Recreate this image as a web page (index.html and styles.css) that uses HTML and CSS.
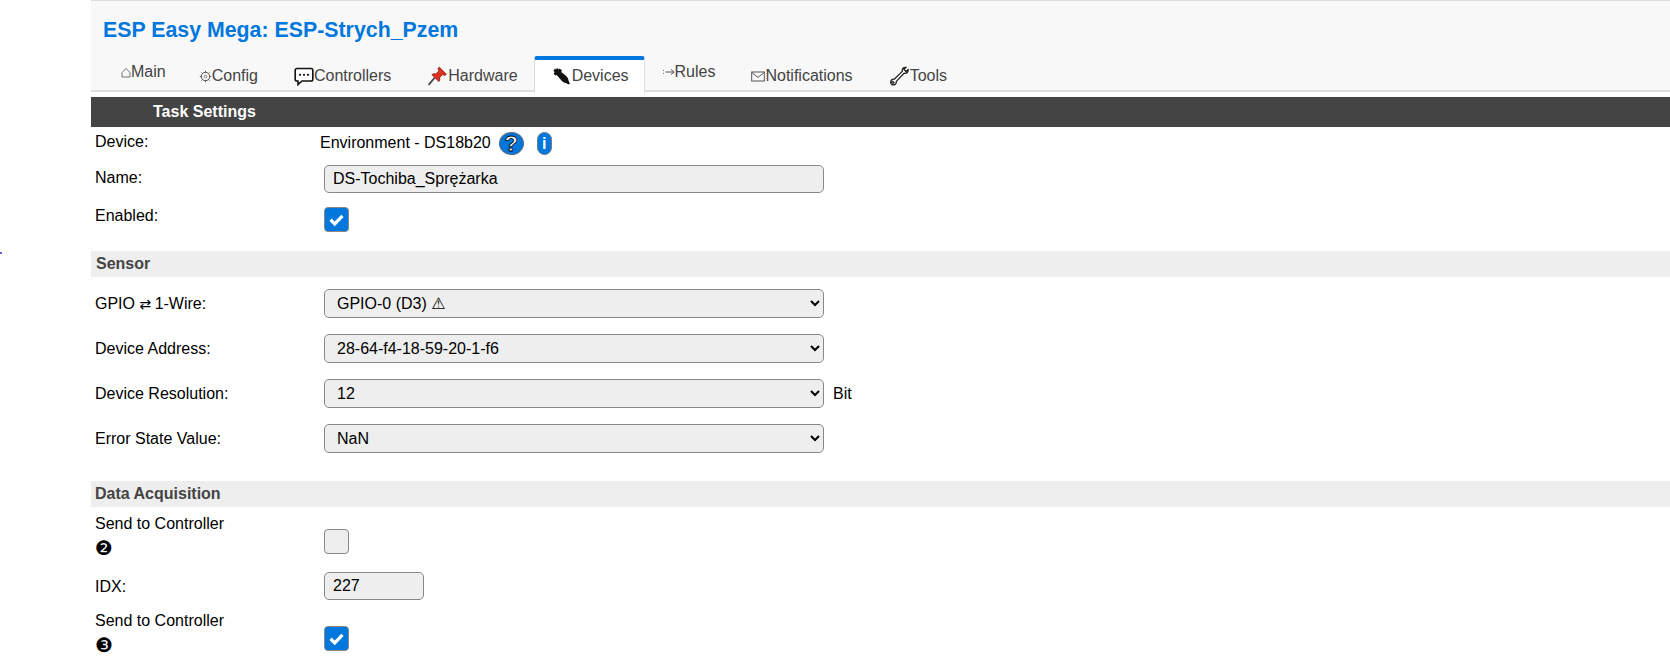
FILE: index.html
```html
<!DOCTYPE html>
<html lang="pl">
<head>
<meta charset="utf-8">
<title>ESP Easy Mega: ESP-Strych_Pzem</title>
<link rel="stylesheet" href="styles.css">
</head>
<body>
<span class="stray-dot"></span>
<main class="page">
  <header class="header">
    <h1 class="title">ESP Easy Mega: ESP-Strych_Pzem</h1>
    <nav class="tabs">
      <a class="tab tab-raised tab-first"><svg class="ico ico-main" viewBox="0 0 10 11"><path d="M1 10V5.6L5 1.4 9 5.6V10Z" fill="none" stroke="#666" stroke-width=".9"/></svg>Main</a>
      <a class="tab"><svg class="ico ico-config" viewBox="0 0 13 13"><circle cx="6.5" cy="6.5" r="4.2" fill="none" stroke="#555" stroke-width="1"/><circle cx="6.5" cy="6.5" r="1.4" fill="none" stroke="#777" stroke-width=".8"/><path d="M6.5 .8v1.6M6.5 10.6v1.6M.8 6.5h1.6M10.6 6.5h1.6M2.5 2.5l1 1M9.5 9.5l1 1M2.5 10.5l1-1M9.5 3.5l1-1" stroke="#555" stroke-width="1"/></svg>Config</a>
      <a class="tab"><svg class="ico ico-chat" viewBox="0 0 20 19"><path d="M3 1.5H17A1.8 1.8 0 0 1 18.8 3.3V12.2A1.8 1.8 0 0 1 17 14H8L4 17.6V14H3A1.8 1.8 0 0 1 1.2 12.2V3.3A1.8 1.8 0 0 1 3 1.5Z" fill="#fff" stroke="#111" stroke-width="1.6"/><circle cx="6" cy="7.8" r="1.1" fill="#111"/><circle cx="10" cy="7.8" r="1.1" fill="#111"/><circle cx="14" cy="7.8" r="1.1" fill="#111"/></svg>Controllers</a>
      <a class="tab tab-hardware"><svg class="ico ico-pin" viewBox="0 0 18 18"><path d="M1 17 6.4 10.6" stroke="#444" stroke-width="1.6"/><path d="M10.6 1 17 7.4 15.4 8.6 13.7 7.6 10.8 10.6C11.4 12.2 11 13.2 10.2 14L4 7.8C4.8 7 6.2 6.6 7.4 7.2L10.4 4.4 9.4 2.6Z" fill="#e0301e" stroke="#7a1208" stroke-width=".7"/></svg>Hardware</a>
      <a class="tab tab-active"><svg class="ico ico-plug" viewBox="0 0 18 18"><path d="M1.6 1.2 3 2.4 4 1l1.6 1.4L6.6 1.6 9 3.4 8.2 5 12.6 8.6C14.4 10 15.6 12 15.8 14.6L17 16.4 15.2 17.6 13.6 16.2C11 15.8 9 14.4 7.4 12.2L3.6 8 2.2 8.6.6 6.4 1.6 5.2.4 3.6 1.6 2.6Z" fill="#111"/></svg>Devices</a>
      <a class="tab tab-raised tab-rules"><svg class="ico ico-rules" viewBox="0 0 13 10"><path d="M1 3.4h.9M1 6.4h.9M3.4 5H12M9 2.4 12 5 9 7.6" fill="none" stroke="#555" stroke-width="1"/></svg>Rules</a>
      <a class="tab"><svg class="ico ico-mail" viewBox="0 0 14 11"><rect x=".7" y="1" width="12.6" height="9" fill="none" stroke="#555" stroke-width="1"/><path d="M.9 1.6 7 6.4 13.1 1.6" fill="none" stroke="#555" stroke-width="1"/></svg>Notifications</a>
      <a class="tab"><svg class="ico ico-tool" viewBox="0 0 20 20"><path d="M16.4 1.4 14.5 3.4 16.6 5.5 18.6 3.6C19 6 17.2 7.8 14.6 7.2L6.8 15.4C7.2 18 4.8 19.6 2.4 18.6L4.4 16.6 3.2 15.4 1.4 17.2C.6 14.8 2.4 12.6 4.8 13.2L12.8 5.4C12.2 3 14.2.8 16.4 1.4Z" fill="#fff" stroke="#222" stroke-width="1.3"/></svg>Tools</a>
    </nav>
  </header>

  <h2 class="main-bar">Task Settings</h2>

  <div class="row row-device">
    <div class="label">Device:</div>
    <div class="device-value">
      <span>Environment - DS18b20</span>
      <span class="help">?</span>
      <span class="info">i</span>
    </div>
  </div>
  <div class="row row-name">
    <div class="label">Name:</div>
    <div><span class="field field-wide">DS-Tochiba_Sprężarka</span></div>
  </div>
  <div class="row row-enabled">
    <div class="label">Enabled:</div>
    <div><span class="check check-on"><svg viewBox="0 0 25 25"><path d="M6 12.8 10.6 17.2 19 8.6" fill="none" stroke="#fff" stroke-width="3.6"/></svg></span></div>
  </div>

  <h3 class="band band-sensor">Sensor</h3>

  <div class="row row-select">
    <div class="label">GPIO <span class="arrows">⇄</span> 1-Wire:</div>
    <select class="picker"><option>GPIO-0 (D3) ⚠</option></select>
  </div>
  <div class="row row-select">
    <div class="label">Device Address:</div>
    <select class="picker"><option>28-64-f4-18-59-20-1-f6</option></select>
  </div>
  <div class="row row-select">
    <div class="label">Device Resolution:</div>
    <div class="with-unit"><select class="picker"><option>12</option></select><span class="unit">Bit</span></div>
  </div>
  <div class="row row-select row-select-last">
    <div class="label">Error State Value:</div>
    <select class="picker"><option>NaN</option></select>
  </div>

  <h3 class="band">Data Acquisition</h3>

  <div class="row row-send">
    <div class="label">Send to Controller<span class="num">❷</span></div>
    <div class="send-value"><span class="check"></span></div>
  </div>
  <div class="row row-idx">
    <div class="label">IDX:</div>
    <div><span class="field field-small">227</span></div>
  </div>
  <div class="row row-send">
    <div class="label">Send to Controller<span class="num">❸</span></div>
    <div class="send-value"><span class="check check-on"><svg viewBox="0 0 25 25"><path d="M6 12.8 10.6 17.2 19 8.6" fill="none" stroke="#fff" stroke-width="3.6"/></svg></span></div>
  </div>
</main>
</body>
</html>
```

FILE: styles.css
```css
* { box-sizing: border-box; }
html, body { margin: 0; padding: 0; height: 671px; overflow: hidden; background: #fff; }
body {
  font-family: "Liberation Sans", "DejaVu Sans", sans-serif;
  font-size: 16px;
  line-height: 18px;
  color: #000;
}
.stray-dot {
  position: absolute;
  left: 0;
  top: 252px;
  width: 2px;
  height: 2px;
  border-radius: 50%;
  background: #2a2ae0;
}
.page { margin-left: 91px; }

.header {
  height: 92px;
  background: #f8f8f8;
  border-top: 1px solid #ddd;
  border-bottom: 2px solid #ddd;
}
.title {
  margin: 0;
  padding: 17px 0 0 12px;
  height: 55px;
  font-size: 21.33px;
  line-height: 24px;
  font-weight: 700;
  color: #07d;
}
.tabs {
  display: flex;
  align-items: flex-start;
  padding-left: 12px;
  height: 37px;
}
.tab {
  display: flex;
  align-items: center;
  height: 37px;
  padding: 3px 18px 0;
  color: #444;
  white-space: nowrap;
}
.tab-raised { padding-top: 0; padding-bottom: 5px; }
.tab-first { padding-right: 15px; }
.tab-hardware { padding-right: 16px; }
.tab-rules { padding-left: 17px; }
.tab-active {
  height: 37px;
  padding: 0 15px 1px 17px;
  background: #fff;
  border: 1px solid #ddd;
  border-top: 4px solid #07d;
  border-bottom: 0;
  border-radius: 3px 3px 0 0;
}
.ico { flex: none; display: block; }
.ico-main { width: 10px; height: 11px; }
.ico-config { width: 13px; height: 13px; }
.ico-chat { width: 20px; height: 19px; }
.ico-pin { width: 21px; height: 20px; }
.ico-plug { width: 20px; height: 18px; }
.ico-rules { width: 13px; height: 10px; }
.ico-mail { width: 14px; height: 11px; }
.ico-tool { width: 21px; height: 20px; }

.main-bar {
  margin: 5px 0 0;
  height: 30px;
  padding: 6px 0 0 62px;
  background: #444;
  color: #fff;
  font-size: 16px;
  line-height: 18px;
  font-weight: 700;
}
.band {
  margin: 0;
  height: 26px;
  padding: 4px 0 0 4px;
  background: #eee;
  color: #444;
  font-size: 16px;
  line-height: 18px;
  font-weight: 700;
}
.band-sensor { margin-bottom: 12px; padding-left: 5px; }

.row {
  display: grid;
  grid-template-columns: 233px 1fr;
}
.label { padding-left: 4px; }
.row-device { height: 38px; grid-template-columns: 229px 1fr; }
.row-device .label { padding-top: 6px; }
.device-value {
  display: flex;
  align-items: flex-start;
  padding-top: 5px;
  line-height: 18px;
}
.device-value > span:first-child { padding-top: 2px; }
.help {
  width: 25px;
  height: 23px;
  margin-left: 8px;
  border-radius: 50%;
  background: #07d;
  border: 1px solid #5a6a7a;
  color: #fff;
  font-size: 22px;
  line-height: 21px;
  font-weight: 700;
  text-align: center;
  -webkit-text-stroke: .8px #000;
}
.info {
  width: 15px;
  height: 23px;
  margin-left: 13px;
  border-radius: 8px;
  background: #07d;
  border: 1px solid #6a7a8a;
  color: #fff;
  font-size: 16px;
  line-height: 21px;
  font-weight: 700;
  text-align: center;
}
.row-name { height: 42px; }
.row-name .label { padding-top: 4px; }
.row-enabled { height: 44px; }

.field {
  display: block;
  height: 28px;
  padding: 4px 8px;
  background: #eee;
  border: 1px solid #888;
  border-radius: 5px;
  line-height: 18px;
}
.field-wide { width: 500px; }
.field-small { width: 100px; }

.check {
  display: block;
  width: 25px;
  height: 25px;
  background: #eee;
  border: 1px solid #888;
  border-radius: 4px;
}
.check svg { display: block; width: 23px; height: 23px; }
.check-on { background: #07d; }

.row-select {
  height: 29px;
  margin-bottom: 16px;
  align-items: center;
}
.row-select-last { margin-bottom: 28px; }
.arrows { font-family: "DejaVu Sans", sans-serif; font-size: 14px; margin-right: -1px; }
.picker {
  display: block;
  width: 500px;
  height: 29px;
  padding: 0 4px 0 8px;
  background-color: #eee;
  border: 1px solid #888;
  border-radius: 5px;
  font: 16px "Liberation Sans", "DejaVu Sans", sans-serif;
  color: #000;
}
.with-unit { display: flex; align-items: center; }
.unit { margin-left: 9px; }

.row-send { height: 65px; }
.row-send .label { padding-top: 6px; line-height: 22px; }
.send-value { padding-top: 22px; }
.num { display: block; margin-top: 2px; font-family: "DejaVu Sans", sans-serif; font-size: 20px; }
.row-idx { height: 32px; }
.row-idx .label { padding-top: 6px; }
```
